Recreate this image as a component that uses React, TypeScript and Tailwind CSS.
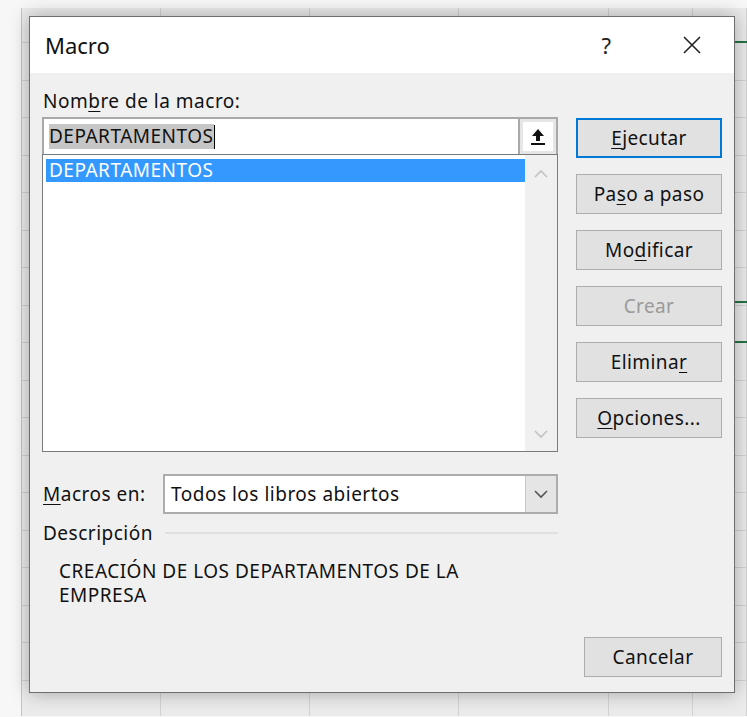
import React from 'react';

const font = { fontFamily: '"Noto Sans", "Open Sans", Arial, sans-serif' };

// Excel sheet that sits behind the dialog
function Sheet() {
  const cols = 6;
  const rows = 19;
  return (
    <div className="relative ml-[21px] mt-[8px] w-[726px] h-[708px] bg-[#ebebeb] border-l border-[#c4c4c4] overflow-hidden">
      <div className="grid grid-cols-[139px_149px_149px_150px_84px_1fr] grid-rows-[35px_repeat(18,37.5px)]">
        {Array.from({ length: cols * rows }).map((_, i) => (
          <div key={i} className="border-r border-b border-[#d2d2d2]" />
        ))}
      </div>
      <div className="absolute left-[713px] top-[33px] w-[20px] h-[2px] bg-[#217346]" />
      <div className="absolute left-[713px] top-[293px] w-[20px] h-[2px] bg-[#217346]" />
      <div className="absolute left-[713px] top-[333px] w-[20px] h-[2px] bg-[#217346]" />
    </div>
  );
}

function Mn({ children }: { children: React.ReactNode }) {
  return <span className="underline underline-offset-[3px] decoration-1">{children}</span>;
}

function DlgButton({
  children,
  primary,
  disabled,
}: {
  children: React.ReactNode;
  primary?: boolean;
  disabled?: boolean;
}) {
  return (
    <button
      className={
        'h-[40px] w-full flex items-center justify-center bg-[#e1e1e1] text-[19px] tracking-[0.4px] ' +
        (primary ? 'border-2 border-[#0078d7] ' : 'border border-[#adadad] ') +
        (disabled ? 'text-[#9a9a9a]' : 'text-[#111]')
      }
    >
      {children}
    </button>
  );
}

function Chevron({ up, className }: { up?: boolean; className?: string }) {
  return (
    <svg width="16" height="10" viewBox="0 0 16 10" className={className}>
      <polyline
        points={up ? '2,8 8,2 14,8' : '2,2 8,8 14,2'}
        fill="none"
        stroke="currentColor"
        strokeWidth="1.6"
      />
    </svg>
  );
}

function MacroDialog() {
  return (
    <div
      className="absolute left-[29px] top-[16px] w-[706px] h-[677px] border border-[#6e6e6e] bg-[#f0f0f0] shadow-[0_0_18px_rgba(0,0,0,0.3)] flex flex-col"
      style={font}
    >
      <div className="h-[56px] bg-white flex items-center pl-[15px] pr-[32px] shrink-0">
        <span className="text-[22px] text-[#111]">Macro</span>
        <span className="ml-auto text-[22px] text-[#222] mr-[71px]">?</span>
        <svg width="20" height="20" viewBox="0 0 20 20">
          <path d="M2 2 L18 18 M18 2 L2 18" stroke="#222" strokeWidth="1.6" />
        </svg>
      </div>

      <div className="flex-1 flex flex-col pl-[12px] pr-[12px] pt-[16px] pb-[15px] text-[19px] tracking-[0.5px] text-[#111]">
        <div className="flex">
          <div className="w-[516px] flex flex-col">
            <div className="h-[24px] leading-[24px] pl-[1px]">
              Nom<Mn>b</Mn>re de la macro:
            </div>
            <div className="mt-[4px] h-[37px] flex border-2 border-[#a9a9a9] border-b-0 bg-white">
              <div className="flex-1 flex items-center pl-[5px]">
                <span className="bg-[#c6c6c6] leading-[25px] h-[25px]">DEPARTAMENTOS</span>
                <span className="w-[1px] h-[24px] bg-black" />
              </div>
              <div className="w-[38px] border-l-2 border-[#a9a9a9] bg-[#e6e6e6] p-[3px]">
                <div className="h-full bg-white flex items-center justify-center">
                  <svg width="16" height="18" viewBox="0 0 16 18">
                    <path d="M8 1 L14 8 L10 8 L10 13 L6 13 L6 8 L2 8 Z" fill="#111" />
                    <rect x="1" y="15" width="14" height="2" fill="#111" />
                  </svg>
                </div>
              </div>
            </div>
            <div className="h-[298px] border border-[#7a7a7a] bg-white flex">
              <div className="flex-1 pt-[4px] pl-[3px]">
                <div className="h-[23px] leading-[23px] bg-[#3399ff] text-white pl-[3px]">DEPARTAMENTOS</div>
              </div>
              <div className="w-[32px] bg-[#f0f0f0] flex flex-col items-center justify-between pt-[14px] pb-[12px] text-[#c2c2c2]">
                <Chevron up />
                <Chevron />
              </div>
            </div>
          </div>

          <div className="ml-[18px] flex-1 pt-[29px] flex flex-col gap-[16px]">
            <DlgButton primary>
              <Mn>E</Mn>jecutar
            </DlgButton>
            <DlgButton>
              Pa<Mn>s</Mn>o a paso
            </DlgButton>
            <DlgButton>
              Mo<Mn>d</Mn>ificar
            </DlgButton>
            <DlgButton disabled>Crear</DlgButton>
            <DlgButton>
              Elimina<Mn>r</Mn>
            </DlgButton>
            <DlgButton>
              <Mn>O</Mn>pciones...
            </DlgButton>
          </div>
        </div>

        <div className="mt-[22px] w-[516px] flex items-center">
          <span className="w-[121px] pl-[1px]">
            <Mn>M</Mn>acros en:
          </span>
          <div className="flex-1 h-[40px] flex border-2 border-[#acacac] bg-white">
            <div className="flex-1 flex items-center pl-[6px]">Todos los libros abiertos</div>
            <div className="w-[31px] bg-[#e5e5e5] border-l border-[#c8c8c8] flex items-center justify-center text-[#555]">
              <Chevron />
            </div>
          </div>
        </div>

        <div className="mt-[7px] w-[516px] h-[24px] flex items-center">
          <span className="pl-[1px]">Descripción</span>
          <div className="flex-1 ml-[12px] h-[2px] bg-[#e0e0e0]" />
        </div>

        <div className="mt-[14px] pl-[17px] leading-[24px]">
          <div>CREACIÓN DE LOS DEPARTAMENTOS DE LA</div>
          <div>EMPRESA</div>
        </div>

        <div className="mt-auto flex justify-end">
          <div className="w-[138px]">
            <DlgButton>Cancelar</DlgButton>
          </div>
        </div>
      </div>
    </div>
  );
}

export default function App() {
  return (
    <div className="relative w-[747px] h-[717px] bg-[#f7f7f7] overflow-hidden">
      <Sheet />
      <MacroDialog />
    </div>
  );
}
